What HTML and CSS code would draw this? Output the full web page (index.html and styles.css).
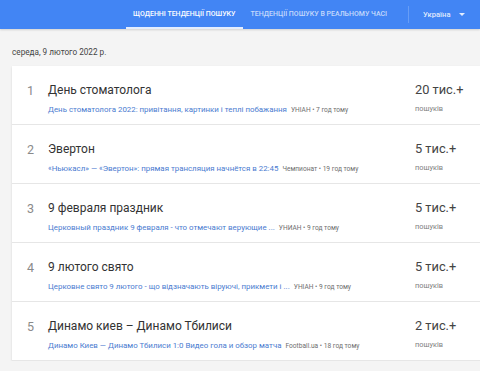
FILE: index.html
```html
<!DOCTYPE html>
<html lang="uk">
<head>
    <meta charset="UTF-8">
    <meta name="viewport" content="width=device-width, initial-scale=1.0">
    <title>Google Trends</title>
    <link rel="stylesheet" href="styles.css">
</head>
<body>
    <div class="header">
        <div class="tab active">Щоденні тенденції пошуку</div>
        <div class="tab">Тенденції пошуку в реальному часі</div>
        <div class="sep"></div>
        <div class="geo">Україна <span class="arrow"></span></div>
    </div>

    <div class="date">середа, 9 лютого 2022 р.</div>

    <div class="card">
        <div class="row">
            <div class="num">1</div>
            <div class="info">
                <div class="title">День стоматолога</div>
                <div class="sub"><span class="link">День стоматолога 2022: привітання, картинки і теплі побажання</span><span class="src">УНІАН • 7 год тому</span></div>
            </div>
            <div class="count">
                <div class="val">20 тис.+</div>
                <div class="lbl">пошуків</div>
            </div>
        </div>
        <div class="row">
            <div class="num">2</div>
            <div class="info">
                <div class="title">Эвертон</div>
                <div class="sub"><span class="link">«Ньюкасл» — «Эвертон»: прямая трансляция начнётся в 22:45</span><span class="src">Чемпионат • 19 год тому</span></div>
            </div>
            <div class="count">
                <div class="val">5 тис.+</div>
                <div class="lbl">пошуків</div>
            </div>
        </div>
        <div class="row">
            <div class="num">3</div>
            <div class="info">
                <div class="title">9 февраля праздник</div>
                <div class="sub"><span class="link">Церковный праздник 9 февраля - что отмечают верующие ...</span><span class="src">УНИАН • 9 год тому</span></div>
            </div>
            <div class="count">
                <div class="val">5 тис.+</div>
                <div class="lbl">пошуків</div>
            </div>
        </div>
        <div class="row">
            <div class="num">4</div>
            <div class="info">
                <div class="title">9 лютого свято</div>
                <div class="sub"><span class="link">Церковне свято 9 лютого - що відзначають віруючі, прикмети і ...</span><span class="src">УНІАН • 9 год тому</span></div>
            </div>
            <div class="count">
                <div class="val">5 тис.+</div>
                <div class="lbl">пошуків</div>
            </div>
        </div>
        <div class="row">
            <div class="num">5</div>
            <div class="info">
                <div class="title">Динамо киев – Динамо Тбилиси</div>
                <div class="sub"><span class="link">Динамо Киев — Динамо Тбилиси 1:0 Видео гола и обзор матча</span><span class="src">Football.ua • 18 год тому</span></div>
            </div>
            <div class="count">
                <div class="val">2 тис.+</div>
                <div class="lbl">пошуків</div>
            </div>
        </div>
    </div>
</body>
</html>
```

FILE: styles.css
```css
html {
    overflow: hidden;
}
body {
    font-family: Roboto, "Liberation Sans", sans-serif;
    background-color: #f4f4f4;
    margin: 0;
    overflow: hidden;
}
.header {
    background-color: #4285f4;
    height: 29px;
    display: flex;
    align-items: stretch;
    padding-left: 126px;
    box-shadow: 0 1px 2px rgba(0, 0, 0, 0.15);
}
.tab {
    color: rgba(255, 255, 255, 0.7);
    font-size: 7px;
    font-weight: 500;
    text-transform: uppercase;
    padding: 0 7px;
    display: flex;
    align-items: center;
    border-bottom: 2px solid transparent;
    box-sizing: border-box;
}
.tab.active {
    color: white;
    border-bottom-color: rgba(255, 255, 255, 0.85);
    margin-right: 1px;
}
.sep {
    width: 1px;
    background-color: rgba(255, 255, 255, 0.2);
    margin: 6px 14px 6px 14px;
}
.geo {
    color: rgba(255, 255, 255, 0.85);
    font-size: 7.6px;
    font-weight: 500;
    display: flex;
    align-items: center;
    gap: 6px;
}
.arrow {
    width: 0;
    height: 0;
    border-left: 3px solid transparent;
    border-right: 3px solid transparent;
    border-top: 3.5px solid rgba(255, 255, 255, 0.85);
    margin-left: 2px;
}
.date {
    font-size: 8.2px;
    color: #444;
    padding: 18px 12px 0 12px;
    height: 19px;
}
.card {
    background-color: white;
    margin-left: 12px;
    width: 480px;
    box-shadow: 0 1px 2px rgba(0, 0, 0, 0.12);
}
.row {
    display: flex;
    align-items: flex-start;
    height: 59px;
    box-sizing: border-box;
    border-bottom: 1px solid #e6e6e6;
    padding-top: 15px;
}
.num {
    width: 36px;
    padding-left: 15px;
    box-sizing: border-box;
    font-size: 12.5px;
    color: #8a8a8a;
    padding-top: 2px;
}
.info {
    flex: 1;
}
.title {
    font-size: 12px;
    color: #333;
    line-height: 18px;
}
.sub {
    margin-top: 5px;
    font-size: 7.9px;
    line-height: 11px;
    white-space: nowrap;
}
.link {
    color: #4a7bd0;
}
.src {
    color: #6e6e6e;
    font-size: 6.6px;
    margin-left: 4px;
}
.count {
    width: 77px;
}
.val {
    font-size: 12.8px;
    color: #444;
    line-height: 18px;
}
.lbl {
    margin-top: 4px;
    font-size: 7.4px;
    color: #808080;
    line-height: 11px;
}
```
